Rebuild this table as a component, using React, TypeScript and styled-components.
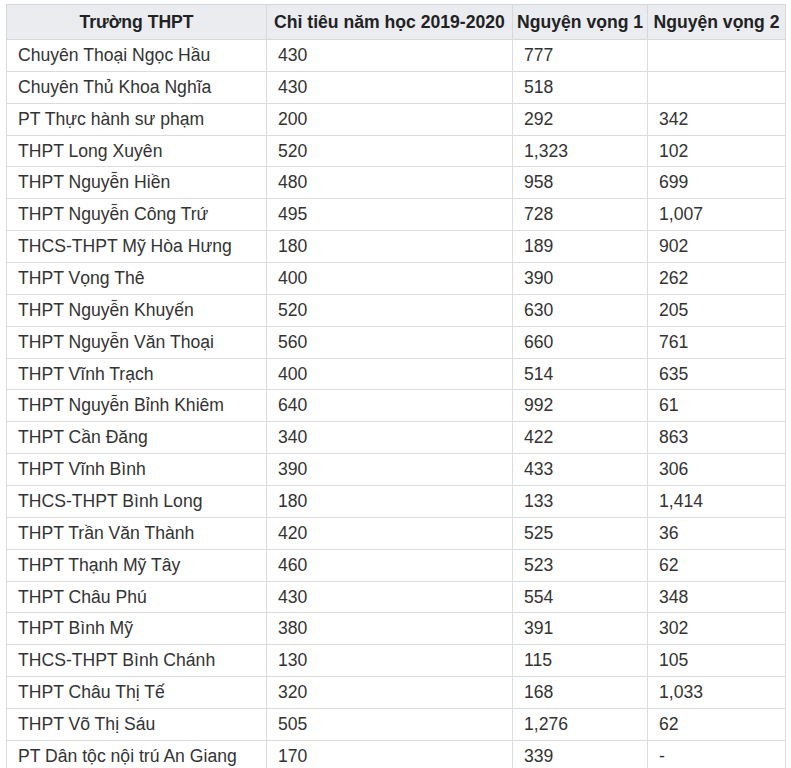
import React from "react";
import styled, { createGlobalStyle } from "styled-components";

const Global = createGlobalStyle`
  html, body { margin: 0; padding: 0; background: #ffffff; }
  body { font-family: "Liberation Sans", Arial, sans-serif; }
`;

const Page = styled.div`
  padding: 4px 0 0 6px;
`;

const Table = styled.table`
  border-collapse: collapse;
  table-layout: fixed;
  width: 779px;
  font-size: 17.6px;
  color: #333333;
`;

const Col = styled.col<{ $w: number }>`
  width: ${(p) => p.$w}px;
`;

const Th = styled.th`
  background: #eaecf0;
  border: 1px solid #d6d8db;
  height: 35px;
  padding: 0 4px;
  font-weight: bold;
  text-align: center;
  color: #222222;
  white-space: nowrap;
  box-sizing: border-box;
`;

const Td = styled.td`
  border: 1px solid #dcdcdc;
  height: 31.86px;
  padding: 0 11px;
  text-align: left;
  white-space: nowrap;
  box-sizing: border-box;
`;

const rows: [string, string, string, string][] = [
  ["Chuyên Thoại Ngọc Hầu", "430", "777", ""],
  ["Chuyên Thủ Khoa Nghĩa", "430", "518", ""],
  ["PT Thực hành sư phạm", "200", "292", "342"],
  ["THPT Long Xuyên", "520", "1,323", "102"],
  ["THPT Nguyễn Hiền", "480", "958", "699"],
  ["THPT Nguyễn Công Trứ", "495", "728", "1,007"],
  ["THCS-THPT Mỹ Hòa Hưng", "180", "189", "902"],
  ["THPT Vọng Thê", "400", "390", "262"],
  ["THPT Nguyễn Khuyến", "520", "630", "205"],
  ["THPT Nguyễn Văn Thoại", "560", "660", "761"],
  ["THPT Vĩnh Trạch", "400", "514", "635"],
  ["THPT Nguyễn Bỉnh Khiêm", "640", "992", "61"],
  ["THPT Cần Đăng", "340", "422", "863"],
  ["THPT Vĩnh Bình", "390", "433", "306"],
  ["THCS-THPT Bình Long", "180", "133", "1,414"],
  ["THPT Trần Văn Thành", "420", "525", "36"],
  ["THPT Thạnh Mỹ Tây", "460", "523", "62"],
  ["THPT Châu Phú", "430", "554", "348"],
  ["THPT Bình Mỹ", "380", "391", "302"],
  ["THCS-THPT Bình Chánh", "130", "115", "105"],
  ["THPT Châu Thị Tế", "320", "168", "1,033"],
  ["THPT Võ Thị Sáu", "505", "1,276", "62"],
  ["PT Dân tộc nội trú An Giang", "170", "339", "-"],
];

export default function App() {
  return (
    <>
      <Global />
      <Page>
        <Table>
          <colgroup>
            <Col $w={260} />
            <Col $w={246} />
            <Col $w={135} />
            <Col $w={138} />
          </colgroup>
          <thead>
            <tr>
              <Th>Trường THPT</Th>
              <Th>Chỉ tiêu năm học 2019-2020</Th>
              <Th>Nguyện vọng 1</Th>
              <Th>Nguyện vọng 2</Th>
            </tr>
          </thead>
          <tbody>
            {rows.map((r, i) => (
              <tr key={i}>
                {r.map((c, j) => (
                  <Td key={j}>{c}</Td>
                ))}
              </tr>
            ))}
          </tbody>
        </Table>
      </Page>
    </>
  );
}
